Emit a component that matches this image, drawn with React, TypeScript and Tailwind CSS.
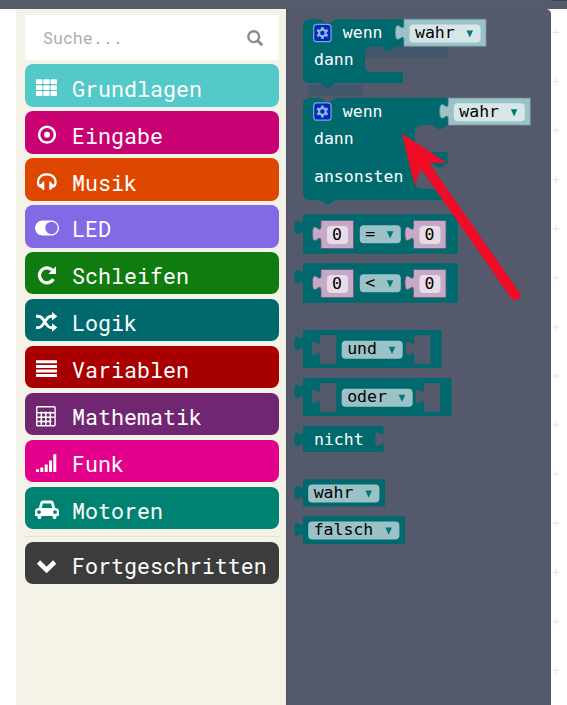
import React from "react";

const TEAL = "#00696d";
const PALE = "#9bc3c7";
const PANEL = "#54596c";

const mono = "font-['Roboto_Mono','DejaVu_Sans_Mono',monospace]";

const icons: Record<string, React.ReactNode> = {
  grid: (
    <g>
      {[2.3, 8.2, 14.1].map((y) =>
        [1, 8.3, 15.6].map((x) => <rect key={`${x}-${y}`} x={x} y={y} width="6.4" height="4.8" rx="0.9" />)
      )}
    </g>
  ),
  dot: (
    <g>
      <circle cx="12" cy="10.700" r="7.9" fill="none" stroke="currentColor" strokeWidth="2.5" />
      <circle cx="12" cy="10.700" r="3" />
    </g>
  ),
  headphones: (
    <g>
      <path d="M3.900 14.800C1.300 8.800 4.800 3.300 11.800 3.300S22.300 8.800 19.700 14.800" fill="none" stroke="currentColor" strokeWidth="2.200" />
      <path d="M2.700 14.600q4.400-1.300 5.400-4.300 1-.2 1.200.5v7.800q-.5.700-1.400.3-1.100-2.300-4.200-2.800zM20.900 14.600q-4.400-1.300-5.400-4.300-1-.2-1.200.5v7.800q.5.700 1.400.3 1.100-2.300 4.200-2.800z" />
    </g>
  ),
  toggle: (
    <g>
      <rect x="0" y="3.500" width="24" height="15" rx="7.500" />
      <circle cx="16.500" cy="11" r="6.200" fill="#8269e6" />
    </g>
  ),
  redo: (
    <g>
      <path d="M18.400 15.200a7.500 7.500 0 1 1-1.200-9.200" fill="none" stroke="currentColor" strokeWidth="3.300" />
      <path d="M21 2.300v7.700h-7.700z" />
    </g>
  ),
  shuffle: (
    <g>
      <path d="M1 5.200h2.500c6 0 6.500 11.400 12.500 11.400h2M1 16.600h2.500c6 0 6.500-11.400 12.500-11.400h2" fill="none" stroke="currentColor" strokeWidth="2.900" />
      <path d="M17 1l5.300 4.200-5.300 4.300zM17 12.300l5.300 4.300-5.300 4.200z" />
    </g>
  ),
  lines: <path d="M1 2.300h21v3H1zM1 6.900h21v3H1zM1 11.500h21v3H1zM1 16.100h21v3H1z" />,
  calculator: (
    <g fill="none" stroke="currentColor" strokeWidth="1.400">
      <rect x="1.700" y="1.700" width="18.400" height="19" rx="1" />
      <path d="M2 7.800h18M2 12.200h13.500M2 16.500h13.500M6.300 8v12.500M10.800 8v12.500M15.300 8v12.500" />
      <path d="M15.300 12.200h4.500" />
      <g fill="currentColor" stroke="none">
        {[7.800, 12.200, 16.500].map((y) => [6.300, 10.800, 15.300].map((x) => <circle key={`${x}-${y}`} cx={x} cy={y} r="1.300" />))}
      </g>
    </g>
  ),
  signal: <path d="M1 17.300h3v2.700H1zM5.300 15.600h3V20h-3zM9.700 12.400h3V20h-3zM14 8.400h3V20h-3zM18.300 2.200h3V20h-3z" />,
  car: (
    <path
      fillRule="evenodd"
      d="M5.200 4Q5.700 1.600 8 1.600h8q2.300 0 2.800 2.400l1.300 5q3.900.2 3.900 3.500V17h-2.500v1.200q0 1.900-1.900 1.900t-1.900-1.900V17H6.300v1.200q0 1.900-1.900 1.900t-1.900-1.900V17H0v-4.500Q0 9.200 3.900 9zM7.900 4.400L6.700 9h10.600l-1.200-4.600zM4 11.200a1.900 1.900 0 1 0 .01 0zM20 11.200a1.900 1.900 0 1 0 .01 0z"
    />
  ),
  chevron: <path d="M3.500 8l8.100 8 8.100-8" fill="none" stroke="currentColor" strokeWidth="4.600" />,
};

function Category({ label, icon, color }: { label: string; icon: string; color: string }) {
  return (
    <div className={`flex h-[42.400px] shrink-0 items-start rounded-lg pl-[10px] text-white ${color}`}>
      <svg viewBox="0 0 24 24" className="mt-[12.300px] size-6 shrink-0" fill="currentColor">
        {icons[icon]}
      </svg>
      <span className={`ml-[13px] mt-[9.290px] text-[21.650px] leading-[30px] ${mono}`}>{label}</span>
    </div>
  );
}

const categories = [
  { label: "Grundlagen", icon: "grid", color: "bg-[#54c9c9]" },
  { label: "Eingabe", icon: "dot", color: "bg-[#c90072]" },
  { label: "Musik", icon: "headphones", color: "bg-[#de4700]" },
  { label: "LED", icon: "toggle", color: "bg-[#8269e6]" },
  { label: "Schleifen", icon: "redo", color: "bg-[#107c10]" },
  { label: "Logik", icon: "shuffle", color: "bg-[#00696d]" },
  { label: "Variablen", icon: "lines", color: "bg-[#a80000]" },
  { label: "Mathematik", icon: "calculator", color: "bg-[#712672]" },
  { label: "Funk", icon: "signal", color: "bg-[#e3008c]" },
  { label: "Motoren", icon: "car", color: "bg-[#008272]" },
];

/* Value block outline: a rectangle with a puzzle tab on its left side. */
function valuePath(x: number, y: number, w: number, h: number, tabY = 5.5) {
  return `M${x} ${y}h${w}v${h}h${-w}v${-(h - tabY - 15.5)}c0-10-8.500 8-8.500-7.750s8.500 2.250 8.500-7.750z`;
}

function Label({ x, y, children, dark }: { x: number; y: number; children: string; dark?: boolean }) {
  return (
    <text x={x} y={y} fill={dark ? "#000" : "#fff"} className="font-['DejaVu_Sans_Mono',monospace] text-[16.500px]">
      {children}
    </text>
  );
}

function Field({ x, y, w, text, light }: { x: number; y: number; w: number; text: string; light?: boolean }) {
  return (
    <g>
      <rect x={x} y={y} width={w} height="18" rx="4" fill={light ? "#d7e7e8" : PALE} />
      <Label x={x + 5.500} y={y + 13.300} dark>{text}</Label>
      <path d={`M${x + w - 14} ${y + 6}h6.600l-3.300 7.200z`} fill="#00777b" />
    </g>
  );
}

function NumberBlock({ x, y }: { x: number; y: number }) {
  return (
    <g>
      <path d={valuePath(x, y, 32.500, 28)} fill="#c6a8c7" stroke="#635f78" strokeWidth="0.9" />
      <rect x={x + 6} y={y + 5.500} width="21" height="18" rx="4" fill="#e8dce8" />
      <Label x={x + 11} y={y + 19.500} dark>0</Label>
    </g>
  );
}

function TrueBlock({ x, y }: { x: number; y: number }) {
  return (
    <g>
      <path d={valuePath(x, y, 82, 27)} fill={PALE} stroke="#73949c" strokeWidth="0.8" />
      <Field x={x + 5.500} y={y + 5.200} w={71} text="wahr" light />
    </g>
  );
}

function Gear({ x, y }: { x: number; y: number }) {
  return (
    <g>
      <rect x={x} y={y} width="17.400" height="17.400" rx="3.300" fill="#0028c8" stroke="#82a9c9" strokeWidth="1.200" />
      <g transform={`translate(${x + 8.7} ${y + 8.7})`}>
        <circle r="3.300" fill="none" stroke="#8fb8d0" strokeWidth="2.200" />
        {[0, 60, 120, 180, 240, 300].map((a) => (
          <rect key={a} x="-1.300" y="-6" width="2.600" height="2.600" fill="#8fb8d0" transform={`rotate(${a})`} />
        ))}
      </g>
    </g>
  );
}

/* Each block's drawing space shares the flyout's horizontal coordinates. */
function Block({ top, height, children, className = "" }: { top: number; height: number; children: React.ReactNode; className?: string }) {
  return (
    <svg viewBox={`286 ${top} 265 ${height}`} width="265" height={height} className={`block shrink-0 overflow-visible ${className}`}>
      {children}
    </svg>
  );
}

function Compare({ top, op, className }: { top: number; op: string; className: string }) {
  return (
    <Block top={top} height={40} className={className}>
      <path d={valuePath(303, top + 0.2, 155, 39.500, 5.500)} fill={TEAL} />
      <NumberBlock x={321} y={top + 6.500} />
      <Field x={359.800} y={top + 11.200} w={41} text={op} />
      <NumberBlock x={413.500} y={top + 6.500} />
    </Block>
  );
}

function Junction({ top, word, width, className }: { top: number; word: string; width: number; className: string }) {
  return (
    <Block top={top} height={38} className={className}>
      <path d={valuePath(303, top, width, 38)} fill={TEAL} />
      <path d={valuePath(320.300, top + 5.300, 16, 28.500)} fill={PANEL} />
      <Field x={341.700} y={top + 10.700} w={width - 77.500} text={word} />
      <path d={valuePath(303 + width - 27.200, top + 5.300, 16, 28.500)} fill={PANEL} />
    </Block>
  );
}

function Flyout() {
  return (
    <section className="relative flex w-[265px] shrink-0 flex-col overflow-hidden rounded-tr-[5px] border-l border-[#4b5062] bg-[#54596c]">
      <div className="-ml-px flex flex-col pt-[10px]">
        <Block top={19} height={70}>
          <path d="M357 46H448V58H357zM308 85H362V96H313Q308 96 308 90z" fill="#44566a" />
          <path
            d="M310 19.300H320.500L326 23.200H330L335.500 19.300H404V46.500H396.500L391 50.500H387.500L382 46.500H372Q365 46.500 365 53.500V65Q365 72 372 72H403V83H335L329 88H326L320 83H310Q303 83 303 76V26.300Q303 19.300 310 19.300z"
            fill={TEAL}
          />
          <TrueBlock x={404} y={19.200} />
          <Gear x={313.700} y={24.300} />
          <Label x={342.800} y={38}>wenn</Label>
          <Label x={314} y={65}>dann</Label>
        </Block>
        <Block top={98} height={106} className="mt-[9px]">
          <path
            d="M310 97.800H320.500L326 101.700H330L335.500 97.800H448V125H447L441.500 129H438L432 125H422Q415 125 415 132V145Q415 152 422 152H447.500V163.500H447L441.500 167.500H438L432 163.500H422Q415 163.500 415 170.500V182Q415 189 422 189H447.500V200H335L329 204.500H326L320 200H310Q303 200 303 193V104.800Q303 97.800 310 97.800z"
            fill={TEAL}
          />
          <TrueBlock x={448.300} y={98.100} />
          <Gear x={313.700} y={102.800} />
          <Label x={342.800} y={117}>wenn</Label>
          <Label x={314} y={144}>dann</Label>
          <Label x={314} y={182}>ansonsten</Label>
        </Block>
        <Compare top={214} op="=" className="mt-[10px]" />
        <Compare top={263} op="<" className="mt-[9px]" />
        <Junction top={330} word="und" width={138.500} className="mt-[27px]" />
        <Junction top={378} word="oder" width={148.500} className="mt-[10px]" />
        <Block top={426} height={26} className="mt-[10px]">
          <path d={valuePath(303, 426, 80.500, 26)} fill={TEAL} />
          <path d="M383.600 431.500c0 10-8.500-8-8.500 7.750s8.500-2.250 8.500 7.750z" fill={PANEL} />
          <Label x={314} y={445}>nicht</Label>
        </Block>
        <Block top={479} height={28} className="mt-[27px]">
          <path d={valuePath(303, 479.200, 82, 27.300)} fill={TEAL} />
          <Field x={308.200} y={484.500} w={71.200} text="wahr" />
        </Block>
        <Block top={516} height={28} className="mt-[9px]">
          <path d={valuePath(303, 516.200, 102, 27.800)} fill={TEAL} />
          <Field x={308.200} y={521.500} w={91.200} text="falsch" />
        </Block>
      </div>
      <svg viewBox="286 9 265 696" width="265" height="696" className="pointer-events-none absolute -left-px top-0">
        <path d="M425 166L515.300 295.300" stroke="#f00b26" strokeWidth="10" strokeLinecap="round" />
        <path d="M401.700 133.400L446.900 162.700L430 163.300L420.700 169.500L414.700 185.300z" fill="#f00b26" />
      </svg>
    </section>
  );
}

export default function App() {
  return (
    <div className="flex h-[705px] w-[567px] flex-col overflow-hidden bg-white">
      <header className="flex h-[9px] shrink-0 justify-end bg-[#545b69]">
        <div className="h-px w-4 bg-[#40454f]" />
      </header>
      <main className="flex h-[696px]">
        <div className="w-4 shrink-0" />
        <aside className="flex w-[270px] shrink-0 flex-col border-l border-[#eef0ee] bg-[#f5f3e7] pl-2 pr-[7px] pt-[6px]">
          <div className="flex h-[45px] shrink-0 items-center justify-between bg-white pl-[18px] pr-4">
            <span className={`mt-[2px] text-[16.600px] text-[#adadad] ${mono}`}>Suche...</span>
            <svg viewBox="0 0 16 16" className="mt-px size-4" fill="none" stroke="#8c8c8c" strokeWidth="2.400">
              <circle cx="6.700" cy="6.700" r="5.400" />
              <path d="M10.500 10.500l4.700 4.700" strokeWidth="2.900" />
            </svg>
          </div>
          <nav className="mt-[4.400px] flex flex-col gap-[4.540px]">
            {categories.map((c) => (
              <Category key={c.label} {...c} />
            ))}
          </nav>
          <div className="mb-[5.300px] mt-[6.700px] h-px bg-[#e2e1e3]" />
          <Category label="Fortgeschritten" icon="chevron" color="bg-[#3c3c3c]" />
        </aside>
        <Flyout />
        <svg viewBox="551 9 16 696" width="16" height="696" className="shrink-0">
          {Array.from({ length: 14 }, (_, i) => (
            <path key={i} d={`M552.500 ${32.500 + i * 49.070}h7M556 ${29 + i * 49.070}v7`} stroke="#e3e7e9" strokeWidth="1" />
          ))}
        </svg>
      </main>
    </div>
  );
}
